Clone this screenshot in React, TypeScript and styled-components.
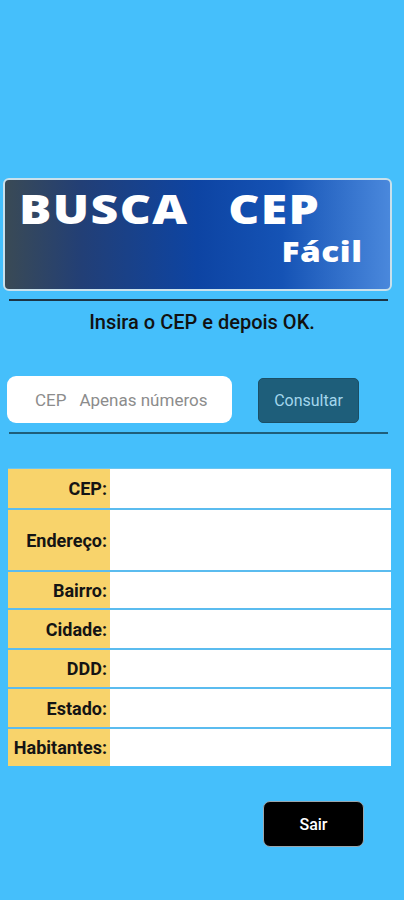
import React from 'react';
import styled, { createGlobalStyle } from 'styled-components';

const GlobalStyle = createGlobalStyle`
  html, body {
    margin: 0;
    padding: 0;
    background-color: #45bffb;
  }
  * {
    box-sizing: border-box;
  }
`;

const Page = styled.div`
  width: 404px;
  min-height: 900px;
  padding-top: 178px;
  display: flex;
  flex-direction: column;
  font-family: Roboto, 'Liberation Sans', sans-serif;
  background-color: #45bffb;
`;

const Banner = styled.div`
  width: 389px;
  height: 113px;
  margin-left: 3px;
  border: 2px solid #c9e1ec;
  border-radius: 6px;
  background: linear-gradient(
    90deg,
    #3a4a55 0%,
    #223f76 20%,
    #0d44a3 50%,
    #1553b5 72%,
    #4a88dc 100%
  );
  display: flex;
  flex-direction: column;
  padding: 9px 27px 0 14px;
  font-family: 'Open Sans', 'Liberation Sans', sans-serif;
  font-weight: 800;
  color: #ffffff;
  overflow: hidden;
`;

const BannerTitle = styled.div`
  display: flex;
  gap: 33px;
  font-size: 40px;
  line-height: 1;
  letter-spacing: 1.2px;
  transform: scaleX(1.2);
  transform-origin: left center;
`;

const BannerSub = styled.div`
  align-self: flex-end;
  margin-top: 7px;
  font-size: 29px;
  line-height: 1;
  letter-spacing: 0.5px;
  transform: scaleX(1.15);
  transform-origin: right center;
`;

const Divider = styled.div<{ $color: string; $top: number }>`
  width: 379px;
  height: 2px;
  margin-left: 9px;
  margin-top: ${(p) => p.$top}px;
  background-color: ${(p) => p.$color};
`;

const Instruction = styled.p`
  margin: 9px 0 0;
  text-align: center;
  font-size: 20px;
  font-weight: 500;
  color: #111111;
`;

const SearchRow = styled.div`
  display: flex;
  align-items: flex-end;
  gap: 26px;
  margin-top: 42px;
  padding-left: 7px;
`;

const Field = styled.label`
  width: 225px;
  height: 47px;
  background-color: #ffffff;
  border-radius: 9px;
  display: flex;
  align-items: center;
  padding-left: 28px;
  gap: 13px;
  font-size: 17px;
  color: #8c8c8c;
`;

const FieldPrefix = styled.span`
  flex-shrink: 0;
`;

const FieldInput = styled.input`
  flex: 1;
  min-width: 0;
  border: none;
  outline: none;
  background: transparent;
  padding: 0;
  font-family: inherit;
  font-size: 17px;
  color: #333333;
  &::placeholder {
    color: #8c8c8c;
  }
`;

const ConsultButton = styled.button`
  width: 101px;
  height: 45px;
  border: 1px solid #1a4f66;
  border-radius: 5px;
  background-color: #1e5e7a;
  color: #a3d6ec;
  font-family: Roboto, 'Liberation Sans', sans-serif;
  font-size: 16px;
  padding: 0;
`;

const Table = styled.div`
  width: 383px;
  margin: 34px 0 0 8px;
  display: flex;
  flex-direction: column;
  border-top: 1px solid #6cc6f2;
`;

const Row = styled.div<{ $height: number }>`
  display: flex;
  height: ${(p) => p.$height}px;
  border-bottom: 2px solid #5bbcef;
  &:last-child {
    border-bottom: none;
  }
`;

const Label = styled.div`
  width: 102px;
  flex-shrink: 0;
  background-color: #f8d36b;
  display: flex;
  align-items: center;
  justify-content: flex-end;
  padding-right: 3px;
  font-size: 18px;
  font-weight: 700;
  color: #141414;
  white-space: nowrap;
`;

const Value = styled.div`
  flex: 1;
  background-color: #ffffff;
`;

const Footer = styled.div`
  display: flex;
  justify-content: flex-end;
  padding-right: 40px;
  margin-top: 35px;
`;

const ExitButton = styled.button`
  width: 101px;
  height: 46px;
  border: 1px solid #9aa6ad;
  border-radius: 7px;
  background-color: #000000;
  color: #ffffff;
  font-family: Roboto, 'Liberation Sans', sans-serif;
  font-size: 16px;
  font-weight: 500;
  padding: 0;
`;

const fields = [
  { label: 'CEP:', height: 41 },
  { label: 'Endereço:', height: 62 },
  { label: 'Bairro:', height: 38 },
  { label: 'Cidade:', height: 40 },
  { label: 'DDD:', height: 39 },
  { label: 'Estado:', height: 40 },
  { label: 'Habitantes:', height: 37 },
];

export default function App() {
  return (
    <>
      <GlobalStyle />
      <Page>
        <Banner>
          <BannerTitle>
            <span>BUSCA</span>
            <span>CEP</span>
          </BannerTitle>
          <BannerSub>Fácil</BannerSub>
        </Banner>
        <Divider $color='#1b3445' $top={8} />
        <Instruction>Insira o CEP e depois OK.</Instruction>
        <SearchRow>
          <Field>
            <FieldPrefix>CEP</FieldPrefix>
            <FieldInput placeholder='Apenas números' inputMode='numeric' />
          </Field>
          <ConsultButton>Consultar</ConsultButton>
        </SearchRow>
        <Divider $color='#1e5e7a' $top={9} />
        <Table>
          {fields.map((f) => (
            <Row key={f.label} $height={f.height}>
              <Label>{f.label}</Label>
              <Value />
            </Row>
          ))}
        </Table>
        <Footer>
          <ExitButton>Sair</ExitButton>
        </Footer>
      </Page>
    </>
  );
}
